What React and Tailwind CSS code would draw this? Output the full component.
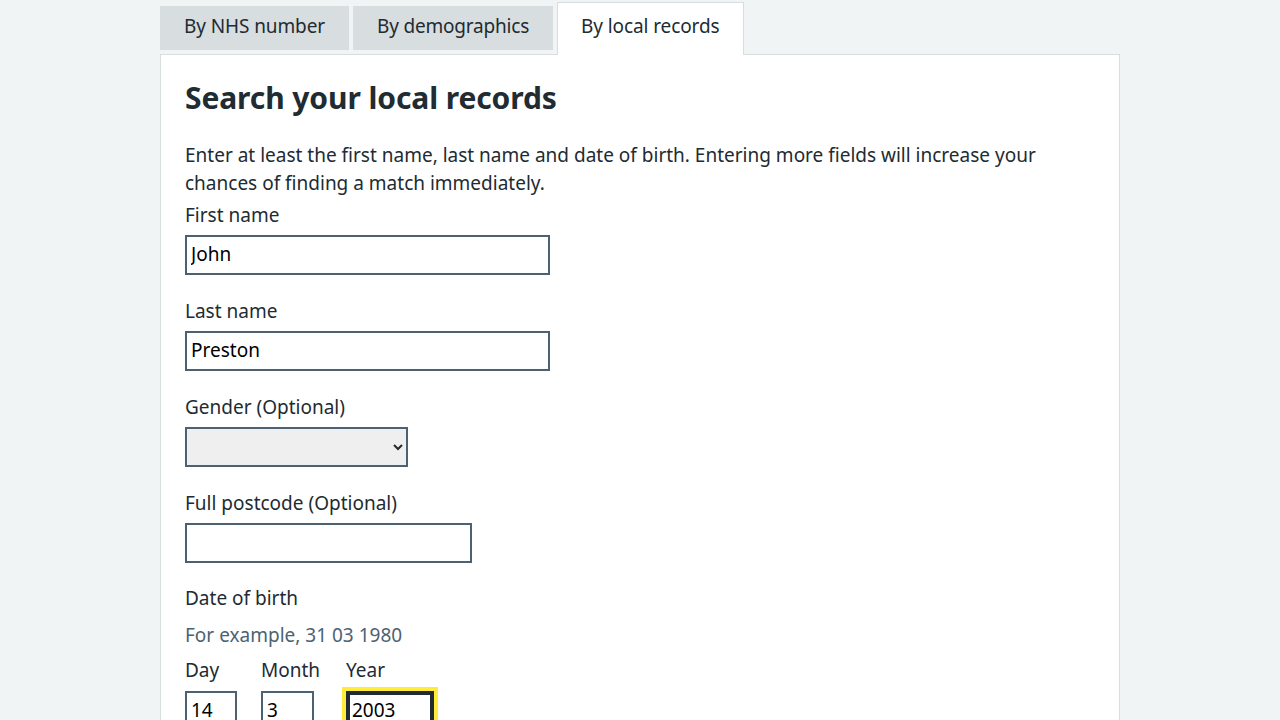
export default function App() {
  const font = { fontFamily: '"Noto Sans", "Open Sans", Arial, sans-serif' }

  const Label = ({ children, className = '' }) => (
    <label className={`block text-[19px] leading-[28px] text-[#212b32] ${className}`}>{children}</label>
  )

  const inputCls =
    'block h-[40px] border-2 border-[#4c6272] bg-white px-[4px] pb-[3px] text-[19px] text-black outline-none'

  return (
    <div className="min-h-[720px] bg-[#f0f4f5] text-[#212b32] overflow-hidden" style={font}>
      <div className="w-[960px] ml-[160px]">
        {/* Tabs */}
        <div className="flex items-end gap-[4px] h-[55px] relative z-10">
          <div className="h-[44px] mb-[5px] pb-[3px] px-[24px] bg-[#d8dde0] flex items-center text-[19px] tracking-[-0.1px]">
            By NHS number
          </div>
          <div className="h-[44px] mb-[5px] pb-[3px] px-[24px] bg-[#d8dde0] flex items-center text-[19px] tracking-[-0.2px]">
            By demographics
          </div>
          <div className="h-[53px] pb-[5px] px-[23px] bg-white border border-b-0 border-[#d8dde0] flex items-center text-[19px] tracking-[-0.1px]">
            By local records
          </div>
        </div>

        {/* Panel */}
        <div className="-mt-[1px] bg-white border border-[#d8dde0] px-[24px] pt-[24px] pb-[40px]">
          <h2 className="text-[30px] leading-[38px] font-bold tracking-[-0.1px]">Search your local records</h2>
          <p className="mt-[24px] text-[19px] leading-[28px]">
            Enter at least the first name, last name and date of birth. Entering more fields will increase your
            chances of finding a match immediately.
          </p>

          <div className="mt-[4px]">
            <Label>First name</Label>
            <input className={`${inputCls} mt-[6px] w-[365px]`} defaultValue="John" />
          </div>

          <div className="mt-[22px]">
            <Label>Last name</Label>
            <input className={`${inputCls} mt-[6px] w-[365px]`} defaultValue="Preston" />
          </div>

          <div className="mt-[22px]">
            <Label>Gender (Optional)</Label>
            <select className="block mt-[6px] h-[40px] w-[223px] border-2 border-[#4c6272] bg-[#efefef] text-[19px] outline-none">
              <option></option>
            </select>
          </div>

          <div className="mt-[22px]">
            <Label>Full postcode (Optional)</Label>
            <input className={`${inputCls} mt-[6px] w-[287px]`} />
          </div>

          <div className="mt-[21px]">
            <Label>Date of birth</Label>
            <div className="mt-[9px] text-[19px] leading-[28px] text-[#4c6272]">For example, 31 03 1980</div>
            <div className="mt-[7px] flex gap-[24px]">
              <div>
                <Label>Day</Label>
                <input className={`${inputCls} mt-[7px] w-[52px]`} defaultValue="14" />
              </div>
              <div className="w-[61px]">
                <Label>Month</Label>
                <input className={`${inputCls} mt-[7px] w-[53px]`} defaultValue="3" />
              </div>
              <div>
                <Label>Year</Label>
                <input
                  className="block mt-[7px] h-[40px] w-[88px] border-2 border-[#212b32] bg-white px-[4px] pb-[3px] text-[19px] text-black outline-[4px] outline outline-[#ffeb3b] shadow-[inset_0_0_0_2px_#212b32]"
                  defaultValue="2003"
                />
              </div>
            </div>
          </div>
        </div>
      </div>
    </div>
  )
}
